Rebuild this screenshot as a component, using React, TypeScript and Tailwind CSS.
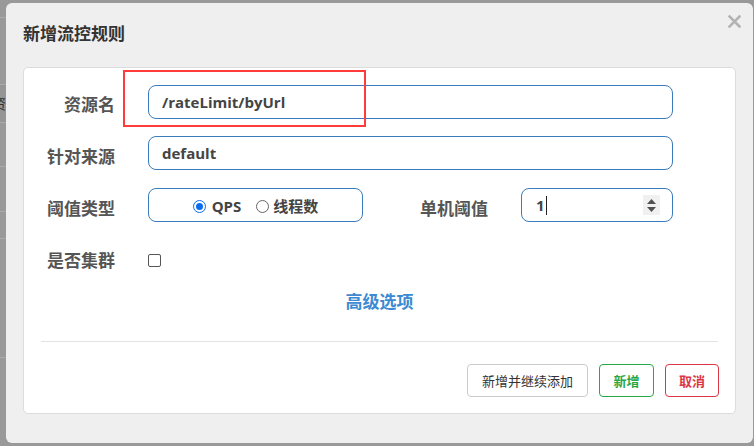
import React from "react";

const cjk = '"Noto Sans CJK SC", "Noto Sans", sans-serif';
const latin = '"Open Sans", "Noto Sans CJK SC", sans-serif';

function Label({ children, className = "" }: { children: React.ReactNode; className?: string }) {
  return (
    <div
      className={`text-right text-[17px] font-bold text-[#555] leading-[34px] ${className}`}
      style={{ fontFamily: cjk }}
    >
      {children}
    </div>
  );
}

function TextBox({ value }: { value: string }) {
  return (
    <div
      className="ml-[33px] w-[525px] h-[34px] border border-[#3a7cbd] rounded-[8px] flex items-center pl-[13px] text-[15px] font-bold text-[#444]"
      style={{ fontFamily: latin }}
    >
      {value}
    </div>
  );
}

function Spinner() {
  return (
    <div className="w-[17px] h-[20px] bg-[#f0f0f0] flex flex-col items-center justify-center gap-[3px]">
      <svg width="9" height="5" viewBox="0 0 9 5">
        <path d="M4.5 0 L9 5 L0 5 Z" fill="#505050" />
      </svg>
      <svg width="9" height="5" viewBox="0 0 9 5">
        <path d="M0 0 L9 0 L4.5 5 Z" fill="#505050" />
      </svg>
    </div>
  );
}

export default function App() {
  return (
    <div className="relative w-[754px] h-[446px] overflow-hidden bg-[#999999]">
      {/* page table behind the overlay */}
      <div className="w-[6px] h-full flex flex-col">
        <div className="h-[18px] border-b border-[#aaaaaa]" />
        <div className="h-[67px] border-b border-[#aaaaaa]" />
        <div
          className="h-[38px] border-b border-[#aaaaaa] bg-[#959595] flex items-center overflow-hidden text-[14px] text-[#333] whitespace-nowrap"
          style={{ fontFamily: cjk }}
        >
          <span className="-ml-[8px]">资</span>
        </div>
        <div className="h-[44px] border-b border-[#aaaaaa]" />
        <div className="h-[45px] border-b border-[#aaaaaa]" />
        <div className="h-[27px] border-b border-[#aaaaaa]" />
        <div className="h-[119px] border-b border-[#aaaaaa]" />
      </div>

      {/* dialog */}
      <div className="absolute left-[6px] top-[3px] w-[747px] h-[440px] bg-[#efefef] rounded-[6px] flex flex-col">
        <div className="h-[64px] flex items-start justify-between pl-[17px] pr-[12px]">
          <div
            className="mt-[19px] text-[17px] leading-[22px] font-bold text-[#333]"
            style={{ fontFamily: cjk }}
          >
            新增流控规则
          </div>
          <svg className="mt-[12px]" width="13" height="13" viewBox="0 0 13 13">
            <path d="M1.5 1.5 L11.5 11.5 M11.5 1.5 L1.5 11.5" stroke="#b3b3b3" strokeWidth="2.6" strokeLinecap="square" />
          </svg>
        </div>

        <div className="ml-[17px] w-[713px] h-[347px] bg-white border border-[#dcdcdc] rounded-[5px] flex flex-col pt-[17px]">
          <div className="flex items-center h-[34px]">
            <Label className="w-[91px] pt-[4px]">资源名</Label>
            <TextBox value="/rateLimit/byUrl" />
          </div>

          <div className="flex items-center h-[34px] mt-[17px]">
            <Label className="w-[91px] pt-[5px]">针对来源</Label>
            <TextBox value="default" />
          </div>

          <div className="flex items-center h-[34px] mt-[18px]">
            <Label className="w-[91px] pt-[5px]">阈值类型</Label>
            <div
              className="ml-[33px] w-[215px] h-[34px] border border-[#3a7cbd] rounded-[8px] flex items-center justify-center pt-[3px] text-[15px] text-[#444]"
              style={{ fontFamily: latin }}
            >
              <span className="w-[13px] h-[13px] rounded-full border-[1.5px] border-[#0b6cf0] flex items-center justify-center">
                <span className="w-[7px] h-[7px] rounded-full bg-[#0b6cf0]" />
              </span>
              <span className="ml-[6px] font-bold">QPS</span>
              <span className="ml-[15px] w-[13px] h-[13px] rounded-full border border-[#666]" />
              <span className="ml-[4px] font-bold" style={{ fontFamily: cjk }}>
                线程数
              </span>
            </div>
            <Label className="w-[125px] pt-[5px]">单机阈值</Label>
            <div className="ml-[33px] w-[152px] h-[34px] border border-[#3a7cbd] rounded-[8px] flex items-center pl-[14px] pr-[12px]">
              <span className="text-[15px] font-bold text-[#444]" style={{ fontFamily: latin }}>
                1
              </span>
              <span className="ml-[1px] w-px h-[19px] bg-[#222]" />
              <span className="flex-1" />
              <Spinner />
            </div>
          </div>

          <div className="flex items-center h-[34px] mt-[20px]">
            <Label className="w-[91px] pt-[1px]">是否集群</Label>
            <span className="ml-[33px] mt-[3px] w-[13px] h-[13px] rounded-[2px] border border-[#555]" />
          </div>

          <div
            className="mt-[13px] text-center text-[17px] leading-[24px] font-bold text-[#3d8ad2]"
            style={{ fontFamily: cjk }}
          >
            高级选项
          </div>

          <div className="mt-[28px] mx-[17px] h-px bg-[#e3e3e3]" />

          <div
            className="mt-[22px] pr-[16px] flex justify-end gap-[11px] text-[13px]"
            style={{ fontFamily: cjk }}
          >
            <div className="w-[121px] h-[33px] border border-[#cccccc] rounded-[4px] flex items-center justify-center text-[#333]">
              新增并继续添加
            </div>
            <div className="w-[55px] h-[33px] border border-[#28a745] rounded-[4px] flex items-center justify-center text-[#28a745] font-bold">
              新增
            </div>
            <div className="w-[54px] h-[33px] border border-[#dc3545] rounded-[4px] flex items-center justify-center text-[#dc3545] font-bold">
              取消
            </div>
          </div>
        </div>
      </div>

      {/* highlight box drawn over the form */}
      <div className="absolute left-[123px] top-[70px] w-[243px] h-[57px] border-2 border-[#ff3b3b]" />
    </div>
  );
}
